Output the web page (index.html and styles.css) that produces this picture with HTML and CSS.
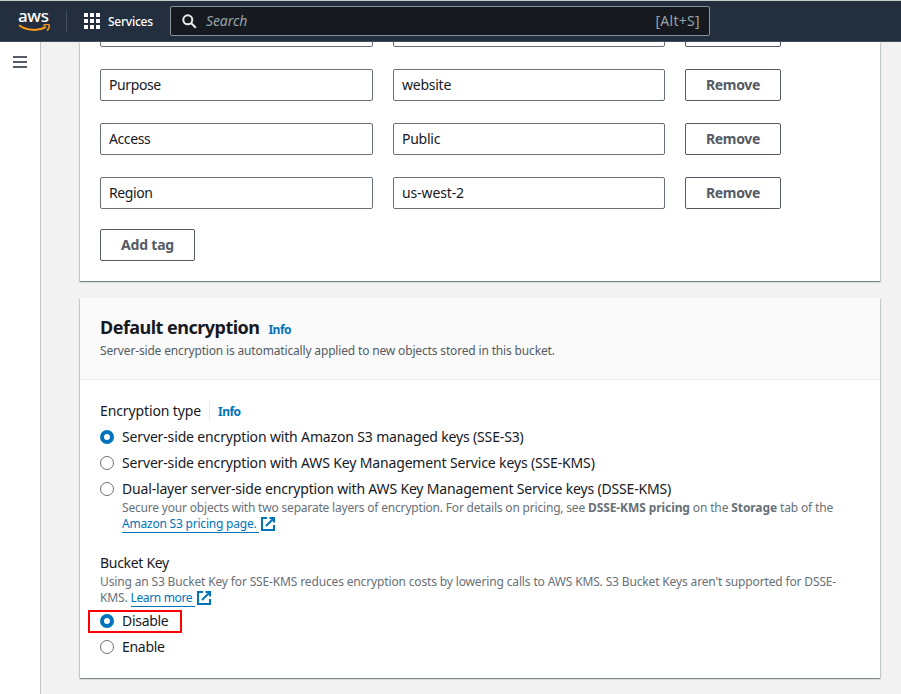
FILE: index.html
```
<!DOCTYPE html>
<html lang="en">
<head>
<meta charset="utf-8">
<title>S3 bucket settings</title>
<link rel="stylesheet" href="styles.css">
</head>
<body>
<header class="topbar">
  <div class="logo">
    <span class="logo-text">aws</span>
    <svg class="logo-smile" width="33" height="9" viewBox="0 0 33 9"><path d="M1 1.200C9 6.800 20 7.400 28 3" fill="none" stroke="#f79a1c" stroke-width="2"/><path d="M25.300 1.500C27.500.3 30 .2 31.200 1c.3 1.800-.7 4.200-2.200 5.600" fill="none" stroke="#f79a1c" stroke-width="1.500"/></svg>
  </div>
  <div class="divider"></div>
  <div class="services">
    <svg width="16" height="16" viewBox="0 0 16 16" fill="#fff"><path d="M0 0h4v4H0zM6 0h4v4H6zM12 0h4v4h-4zM0 6h4v4H0zM6 6h4v4H6zM12 6h4v4h-4zM0 12h4v4H0zM6 12h4v4H6zM12 12h4v4h-4z"/></svg>
    <span>Services</span>
  </div>
  <div class="search">
    <svg width="15" height="15" viewBox="0 0 15 15" fill="none" stroke="#eaeded" stroke-width="2"><circle cx="5.800" cy="5.800" r="4.500"/><path d="M9 9l4.800 4.800"/></svg>
    <span class="placeholder">Search</span>
    <span class="shortcut">[Alt+S]</span>
  </div>
</header>
<div class="layout">
  <nav class="side"><svg width="14" height="12" viewBox="0 0 14 12" fill="#545b64"><path d="M0 0h14v2H0zM0 5h14v2H0zM0 10h14v2H0z"/></svg></nav>
  <main class="content">
    <section class="panel tags">
      <div class="tag-row"><div class="input"></div><div class="input"></div><div class="button remove"></div></div>
      <div class="tag-row"><div class="input">Purpose</div><div class="input">website</div><div class="button remove">Remove</div></div>
      <div class="tag-row"><div class="input">Access</div><div class="input">Public</div><div class="button remove">Remove</div></div>
      <div class="tag-row"><div class="input">Region</div><div class="input region">us-west-2</div><div class="button remove">Remove</div></div>
      <div class="button add">Add tag</div>
    </section>
    <section class="panel encryption">
      <div class="panel-head">
        <div class="title-row"><h2>Default encryption</h2><a class="info">Info</a></div>
        <p class="sub">Server-side encryption is automatically applied to new objects stored in this bucket.</p>
      </div>
      <div class="panel-body">
        <div class="label-row"><span class="label type">Encryption type</span><a class="info bordered">Info</a></div>
        <div class="option"><span class="radio on"></span><span>Server-side encryption with Amazon S3 managed keys (SSE-S3)</span></div>
        <div class="option"><span class="radio"></span><span class="opt-kms">Server-side encryption with AWS Key Management Service keys (SSE-KMS)</span></div>
        <div class="option"><span class="radio"></span><span class="opt-dual">Dual-layer server-side encryption with AWS Key Management Service keys (DSSE-KMS)</span></div>
        <div class="hint indent">
          <span class="secure">Secure your objects with two separate layers of encryption. For details on pricing, see</span> <b>DSSE-KMS pricing</b> on the <b>Storage</b> tab of the<br>
          <a class="link">Amazon S3 pricing page. </a><svg class="ext" width="14" height="14" viewBox="0 0 14 14" fill="none" stroke="#0073bb" stroke-width="2"><path d="M6 1H1v12h12V8M8.500 1H13v4.500M13 1L5 9"/></svg>
        </div>
        <div class="label bucket">Bucket Key</div>
        <div class="hint">
          Using an S3 Bucket Key for SSE-KMS reduces encryption costs by lowering calls to AWS KMS. S3 Bucket Keys aren't supported for DSSE-<br>
          KMS. <a class="link learn">Learn more </a><svg class="ext" width="14" height="14" viewBox="0 0 14 14" fill="none" stroke="#0073bb" stroke-width="2"><path d="M6 1H1v12h12V8M8.500 1H13v4.500M13 1L5 9"/></svg>
        </div>
        <div class="option highlighted"><span class="radio on"></span><span class="short">Disable</span></div>
        <div class="option"><span class="radio"></span><span class="short">Enable</span></div>
      </div>
    </section>
  </main>
</div>
</body>
</html>
```
FILE: styles.css
```
*, *::before { box-sizing: border-box; }
body {
  margin: 0;
  height: 694px;
  overflow: hidden;
  background: #f2f2f2;
  color: #16191f;
  font: 14px/22px "Noto Sans", "Open Sans", sans-serif;
  letter-spacing: -0.15px;
}
svg { display: block; flex: none; }
h2, p { margin: 0; }

.topbar {
  display: flex;
  align-items: center;
  height: 42px;
  padding-left: 18px;
  background: #232f3e;
  border-top: 1px solid #c3cdc9;
  border-bottom: 1px solid #414d5c;
}
.logo { width: 33px; height: 24px; }
.logo-text {
  display: block;
  height: 15px;
  color: #fff;
  font: 500 17px/13px "Noto Sans", sans-serif;
  letter-spacing: -0.4px;
}
.divider { width: 1px; height: 22px; margin-left: 15px; background: #414d5c; }
.services {
  display: flex;
  align-items: center;
  gap: 8px;
  width: 86px;
  margin-left: 17px;
  color: #fff;
  font-size: 12px;
  font-weight: 500;
  letter-spacing: -0.25px;
}
.services span { padding-top: 1px; }
.search {
  display: flex;
  align-items: center;
  width: 540px;
  height: 30px;
  padding: 0 9px 0 11px;
  background: #16191f;
  border: 1px solid #879596;
  border-radius: 2px;
  color: #95a5a6;
  letter-spacing: 0.3px;
}
.placeholder { flex: 1; margin-left: 9px; font-style: italic; letter-spacing: -0.1px; }

.layout { display: flex; height: 652px; }
.side { flex: none; width: 41px; padding: 14px 0 0 13px; background: #fff; border-right: 1px solid #c2c6ca; }
.content { flex: none; width: 839px; padding-left: 39px; }
.panel {
  background: #fff;
  box-shadow: 0 1px 1px rgba(0, 28, 36, 0.3), 1px 1px 1px rgba(0, 28, 36, 0.15), -1px 1px 1px rgba(0, 28, 36, 0.15);
}
.tags {
  display: flex;
  flex-direction: column;
  justify-content: flex-end;
  gap: 22px;
  height: 239px;
  padding: 0 20px 20px;
  overflow: hidden;
}
.tag-row { display: grid; flex: none; grid-template-columns: 273px 272px 96px; gap: 20px; }
.input {
  height: 32px;
  padding: 4px 8px;
  border: 1px solid #687078;
  border-radius: 2px;
  letter-spacing: -0.4px;
}
.input + .input { letter-spacing: -0.25px; }
.tag-row .region { letter-spacing: -0.12px; }
.button {
  flex: none;
  height: 32px;
  border: 1px solid #545b64;
  border-radius: 2px;
  color: #545b64;
  font-weight: 700;
  line-height: 30px;
  text-align: center;
  letter-spacing: -0.2px;
}
.remove { letter-spacing: -0.35px; }
.add { width: 95px; margin-top: -2px; }

.encryption { margin-top: 17px; }
.panel-head { height: 82px; padding: 18px 20px 0; background: #fafafa; border-bottom: 1px solid #eaeded; }
.title-row { display: flex; align-items: baseline; gap: 9px; height: 27px; }
h2 { font-size: 18px; line-height: 22px; letter-spacing: -0.52px; }
.info { color: #0073bb; font-size: 12px; font-weight: 700; letter-spacing: -0.5px; }
.sub { color: #545b64; font-size: 12px; line-height: 16px; letter-spacing: -0.16px; }
.panel-body { padding: 20px; }
.label-row { display: flex; margin-bottom: 4px; }
.type { width: 101px; white-space: nowrap; letter-spacing: -0.12px; }
.bordered { height: 22px; margin-left: 8px; padding: 1px 0 0 8px; border-left: 1px solid #eaeded; }
.option { position: relative; display: flex; align-items: center; gap: 8px; height: 22px; margin-bottom: 4px; white-space: nowrap; }
.opt-dual { letter-spacing: -0.173px; }
.option:has(+ .hint) { margin-bottom: 0; }
.option:last-child { margin-bottom: 0; }
.short { letter-spacing: -0.3px; }
.radio { flex: none; width: 14px; height: 14px; border: 1px solid #687078; border-radius: 50%; background: #fff; }
.radio.on { border: 4px solid #0073bb; }
.hint { margin-bottom: 4px; color: #687078; font-size: 12px; line-height: 16px; letter-spacing: -0.147px; white-space: nowrap; }
.hint b { letter-spacing: -0.09px; }
.indent { margin: 0 0 20px 22px; }
.secure { letter-spacing: -0.19px; }
.bucket { letter-spacing: -0.3px; }
.link { color: #0073bb; border-bottom: 1px solid #0073bb; letter-spacing: -0.21px; white-space: pre; }
.learn { letter-spacing: -0.35px; }
.ext { display: inline-block; margin-left: 2px; vertical-align: -3px; }
.highlighted::before {
  content: "";
  position: absolute;
  left: -12px;
  top: 0;
  width: 94px;
  height: 23px;
  border: 2px solid #f00;
}
```
